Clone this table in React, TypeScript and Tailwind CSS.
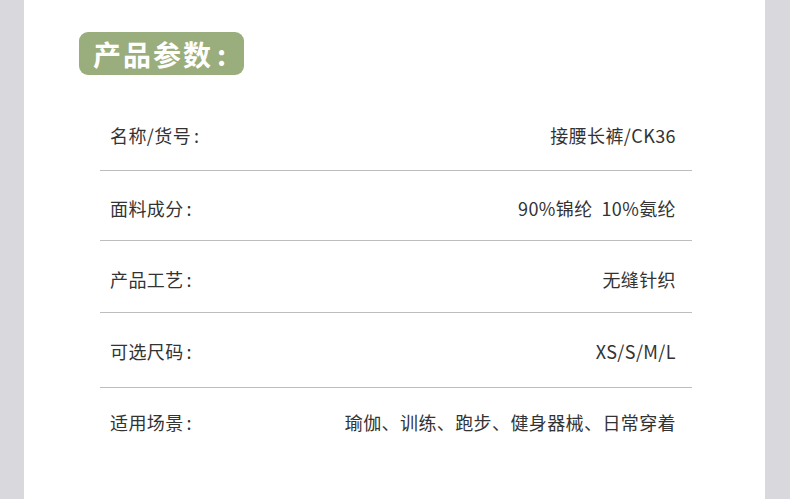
const rows = [
  { label: "名称/货号", value: "接腰长裤/CK36", cls: "pt-[23px] pb-[23px]" },
  { label: "面料成分", value: "90%锦纶\u00a0\u00a010%氨纶", cls: "pt-[25px] pb-[20px]" },
  { label: "产品工艺", value: "无缝针织", cls: "pt-[26px] pb-[21px]" },
  { label: "可选尺码", value: "XS/S/M/L", cls: "pt-[26px] pb-[24px]" },
  { label: "适用场景", value: "瑜伽、训练、跑步、健身器械、日常穿着", cls: "pt-[22px] pb-[40px]" },
];

export default function App() {
  return (
    <div
      className="flex h-[499px] w-[790px] bg-[#d9d8dd]"
      style={{ fontFamily: '"Noto Sans CJK SC", "Noto Sans", sans-serif' }}
    >
      <div className="ml-[24px] w-[741px] bg-white">
        <div className="pl-[55px] pt-[32px]">
          <div className="inline-flex h-[43px] items-center rounded-[9px] bg-[#9aad7c] pl-[14px] pr-[16px] text-[28px] font-bold leading-none tracking-[2px] text-white">
            产品参数<span className="ml-[4px]">:</span>
          </div>
        </div>
        <div className="mt-[25px] ml-[76px] w-[592px]">
          {rows.map((r, i) => (
            <div
              key={r.label}
              className={`flex items-center justify-between px-[10px] text-[18px] leading-[24px] tracking-[0.4px] text-[#333] ${r.cls} ${
                i < rows.length - 1 ? "border-b border-[#bdbdbd]" : ""
              }`}
            >
              <span>
                {r.label}
                <span className="ml-[3px]">:</span>
              </span>
              <span className="mr-[6px]">{r.value}</span>
            </div>
          ))}
        </div>
      </div>
    </div>
  );
}
